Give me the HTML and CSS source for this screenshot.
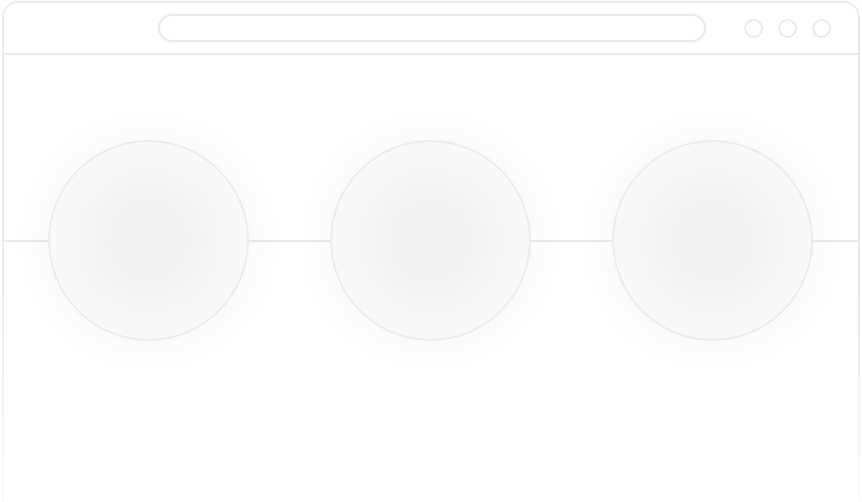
FILE: index.html
```html
<!DOCTYPE html>
<html>
<head>
<meta charset="utf-8">
<link rel="stylesheet" href="styles.css">
</head>
<body>
<div class="window">
  <div class="toolbar">
    <div class="url"></div>
    <div class="dots">
      <span class="dot"></span>
      <span class="dot"></span>
      <span class="dot"></span>
    </div>
  </div>
  <div class="content">
    <div class="row">
      <div class="ball"></div>
      <div class="ball"></div>
      <div class="ball"></div>
    </div>
  </div>
</div>
</body>
</html>
```
FILE: styles.css
```css
html, body {
  margin: 0;
  padding: 0;
  background: #ffffff;
  font-family: "Liberation Sans", Arial, sans-serif;
}
.window {
  position: relative;
  margin: 1px 2px 0 2px;
  height: 501px;
  box-sizing: border-box;
  padding: 2px 2px 0 2px;
}
.window::before {
  content: "";
  position: absolute;
  inset: 0;
  border: 2px solid #ebebeb;
  border-bottom: none;
  border-radius: 16px 16px 0 0;
  -webkit-mask-image: linear-gradient(to bottom, #000 55%, rgba(0,0,0,0.25) 100%);
  mask-image: linear-gradient(to bottom, #000 55%, rgba(0,0,0,0.25) 100%);
  pointer-events: none;
}
.toolbar {
  height: 50px;
  border-bottom: 2px solid #ebebeb;
  display: flex;
  align-items: center;
  padding: 0 0 0 154px;
  box-sizing: content-box;
}
.url {
  width: 544px;
  height: 24px;
  border: 2px solid #ebebeb;
  border-radius: 14px;
}
.dots {
  display: flex;
  gap: 15px;
  margin-left: 38px;
}
.dot {
  width: 15px;
  height: 15px;
  border: 2px solid #ebebeb;
  border-radius: 50%;
}
.content {
  padding-top: 85px;
}
.row {
  position: relative;
  display: flex;
  justify-content: space-between;
  padding: 0 45px 0 44px;
}
.row::before {
  content: "";
  position: absolute;
  left: 0;
  right: 0;
  top: 100px;
  height: 2px;
  background: #ebebeb;
}
.ball {
  position: relative;
  width: 201px;
  height: 201px;
  box-sizing: border-box;
  border: 2px solid #ececec;
  border-radius: 50%;
  background: radial-gradient(circle at center, #efefef 0%, #f1f1f1 30%, #f7f7f7 62%, #fefefe 100%);
  box-shadow: 0 0 44px rgba(0,0,0,0.04);
}
```
